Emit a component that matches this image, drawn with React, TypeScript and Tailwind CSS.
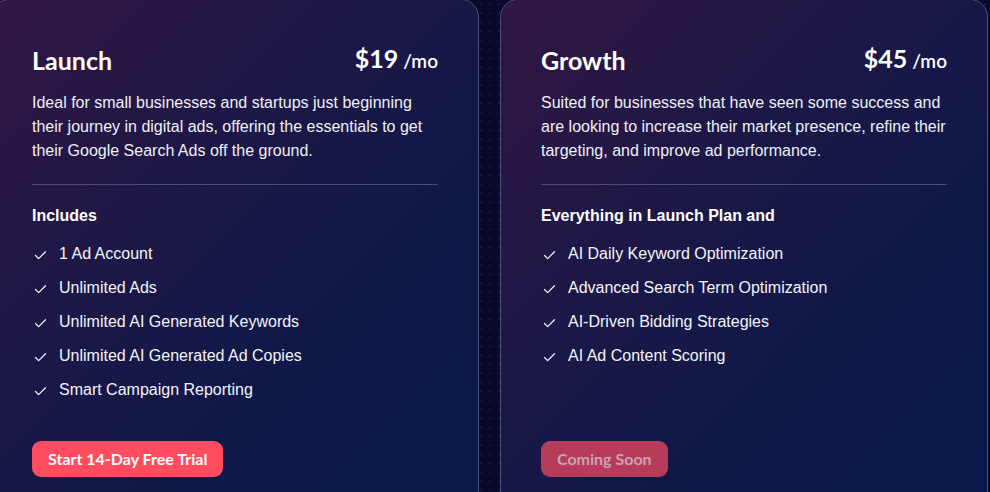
import { Check } from "lucide-react";

type Plan = {
  name: string;
  price: string;
  blurb: string;
  heading: string;
  features: string[];
  cta: string;
  disabled?: boolean;
};

const plans: Plan[] = [
  {
    name: "Launch",
    price: "$19",
    blurb:
      "Ideal for small businesses and startups just beginning their journey in digital ads, offering the essentials to get their Google Search Ads off the ground.",
    heading: "Includes",
    features: [
      "1 Ad Account",
      "Unlimited Ads",
      "Unlimited AI Generated Keywords",
      "Unlimited AI Generated Ad Copies",
      "Smart Campaign Reporting",
    ],
    cta: "Start 14-Day Free Trial",
  },
  {
    name: "Growth",
    price: "$45",
    blurb:
      "Suited for businesses that have seen some success and are looking to increase their market presence, refine their targeting, and improve ad performance.",
    heading: "Everything in Launch Plan and",
    features: [
      "AI Daily Keyword Optimization",
      "Advanced Search Term Optimization",
      "AI-Driven Bidding Strategies",
      "AI Ad Content Scoring",
    ],
    cta: "Coming Soon",
    disabled: true,
  },
];

function PlanCard({ plan }: { plan: Plan }) {
  return (
    <div className="flex h-[540px] w-[488px] shrink-0 flex-col rounded-[18px] border border-[#4a5078] bg-[linear-gradient(135deg,#311642_0%,#1c1847_38%,#0c1848_72%,#0a1a4c_100%)] px-10 pt-[42px] text-white">
      <div className="flex items-center justify-between font-['Lato',sans-serif]">
        <h2 className="text-[25px] font-bold leading-8">{plan.name}</h2>
        <p className="leading-8">
          <span className="text-[25px] font-bold">{plan.price}</span>
          <span className="ml-[5px] text-[19px] font-semibold">/mo</span>
        </p>
      </div>

      <p className="mt-[13px] font-['Liberation_Sans',Arial,sans-serif] text-[16px] leading-6 text-[#eef0f7]">
        {plan.blurb}
      </p>

      <hr className="mt-[21px] border-t border-[#464c72]" />

      <h3 className="mt-[21px] font-['Liberation_Sans',Arial,sans-serif] text-[16px] font-bold leading-5">
        {plan.heading}
      </h3>

      <ul className="mt-4 flex flex-col gap-[10px] font-['Liberation_Sans',Arial,sans-serif] text-[16px] leading-6 text-[#f3f4f9]">
        {plan.features.map((f) => (
          <li key={f} className="flex items-center">
            <Check size={15} strokeWidth={2} className="ml-[1px] mr-[11px] mt-[2px]" />
            {f}
          </li>
        ))}
      </ul>

      <div className="mt-auto mb-[61px]">
        <button
          className={
            plan.disabled
              ? "h-[36px] rounded-[9px] bg-[#b73c59] px-4 font-['Lato',sans-serif] text-[16px] font-bold text-[#c9a3b4]"
              : "h-[36px] rounded-[9px] bg-[#ff4d5f] px-4 font-['Lato',sans-serif] text-[16px] font-bold text-white"
          }
        >
          {plan.cta}
        </button>
      </div>
    </div>
  );
}

export default function App() {
  return (
    <main className="h-[492px] w-[990px] overflow-hidden bg-[#09092a] bg-[radial-gradient(#1c1c48_1px,transparent_1px)] bg-[length:9px_9px]">
      <div className="ml-[-9px] mt-[-1px] flex gap-[21px]">
        {plans.map((p) => (
          <PlanCard key={p.name} plan={p} />
        ))}
      </div>
    </main>
  );
}
